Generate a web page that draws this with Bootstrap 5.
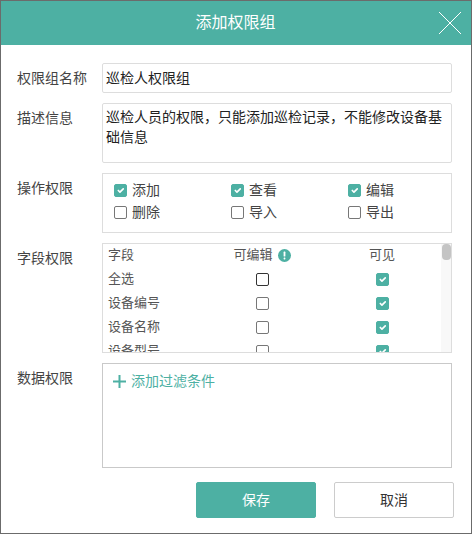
<!DOCTYPE html>
<html lang="zh">
<head>
<meta charset="utf-8">
<title>添加权限组</title>
<link rel="stylesheet" href="https://cdn.jsdelivr.net/npm/bootstrap@5.3.0/dist/css/bootstrap.min.css">
<style>
html,body{height:100%;background:#fff}
body{font-family:"Liberation Sans","Noto Sans CJK SC",sans-serif;font-size:14px;color:#333}
.dlg{width:472px;height:534px;border:1px solid #6b6b6b;display:flex;flex-direction:column;overflow:hidden}
.dlg-head{height:44px;flex:none;background:#4db0a3;color:#fff;font-size:16px;position:relative}
.dlg-head span{margin-left:-1px}
.dlg-x{position:absolute;right:9px;top:10px}
.dlg-body{flex:1;padding:18px 19px 0 16px}
.frow{display:flex;margin-bottom:10px}
.flabel{width:85px;flex:none;color:#444;line-height:20px;padding-top:5px}
.fbox{border:1px solid #ddd;min-width:0;width:350px;flex:none}
.name-box{height:30px;border-radius:2px;padding:0 3px;line-height:29px;color:#222}
.desc-box{height:60px;border-radius:2px;padding:3px 3px;line-height:20px;color:#222;font-family:"Liberation Sans","Noto Sans CJK TC",sans-serif}
.ops{height:60px;padding:5px 11px}
.op-item{width:117px;height:22px;display:flex;align-items:center;gap:5px;color:#444}
.op-item:nth-child(3n){width:92px}
.form-check-input.ck[type=checkbox]{width:13px;height:13px;margin:0;flex:none;border:1px solid #777;border-radius:2px;background-size:11px;box-shadow:none}
.form-check-input.ck[type=checkbox]:checked{background-color:#4db0a3;border-color:#4db0a3}
.form-check-input.ck-dark[type=checkbox]{border-color:#333}
.fields{height:110px;position:relative;overflow:hidden;font-size:13px;color:#555;padding-left:5px}
.frw{height:24px;display:flex;align-items:center;flex:none;margin-top:-1px;margin-bottom:1px}
.fc1{width:95px}
.fc2{width:118px;display:flex;justify-content:center;align-items:center;gap:5px}
.fc3{width:122px;display:flex;justify-content:center}
.track{position:absolute;right:0;top:0;bottom:0;width:10px;background:#f8f8f8}
.thumb{position:absolute;right:0;top:0;height:16px;width:9px;background:#c4c4c4;border-radius:4px}
.databox{height:105px;border-color:#c9c9c9;padding:7px 10px}
.add-link{color:#4db0a3;display:flex;align-items:center;gap:5px;line-height:20px}
.dlg-foot{display:flex;justify-content:flex-end;gap:18px;margin-top:14px;margin-right:-2px}
.btn-s,.btn-c{width:120px;height:36px;font-size:14px;border-radius:2px;padding:0}
.btn-s{background:#4db0a3;border:1px solid #4db0a3;color:#fff}
.btn-c{background:#fff;border:1px solid #ccc;color:#333}
</style>
</head>
<body>
<div class="dlg">
  <div class="dlg-head d-flex align-items-center justify-content-center">
    <span>添加权限组</span>
    <svg class="dlg-x" width="24" height="24" viewBox="0 0 24 24" fill="none" stroke="#fff" stroke-width="1"><path d="M1 1 23 23M23 1 1 23"/></svg>
  </div>
  <div class="dlg-body">
    <div class="frow"><div class="flabel">权限组名称</div><div class="fbox name-box">巡检人权限组</div></div>
    <div class="frow"><div class="flabel">描述信息</div><div class="fbox desc-box">巡检人员的权限，只能添加巡检记录，不能修改设备基础信息</div></div>
    <div class="frow"><div class="flabel">操作权限</div>
      <div class="fbox ops d-flex flex-wrap align-content-start">
        <label class="op-item"><input class="form-check-input ck" type="checkbox" checked>添加</label>
        <label class="op-item"><input class="form-check-input ck" type="checkbox" checked>查看</label>
        <label class="op-item"><input class="form-check-input ck" type="checkbox" checked>编辑</label>
        <label class="op-item"><input class="form-check-input ck" type="checkbox">删除</label>
        <label class="op-item"><input class="form-check-input ck" type="checkbox">导入</label>
        <label class="op-item"><input class="form-check-input ck" type="checkbox">导出</label>
      </div>
    </div>
    <div class="frow"><div class="flabel">字段权限</div>
      <div class="fbox fields">
        <div class="frw"><div class="fc1">字段</div><div class="fc2">可编辑
          <svg width="13" height="13" viewBox="0 0 13 13"><circle cx="6.5" cy="6.5" r="6.5" fill="#4db0a3"/><rect x="5.6" y="2.6" width="1.8" height="5" rx=".6" fill="#fff"/><rect x="5.6" y="8.6" width="1.8" height="1.8" rx=".6" fill="#fff"/></svg></div><div class="fc3">可见</div></div>
        <div class="frw"><div class="fc1">全选</div><div class="fc2"><input class="form-check-input ck ck-dark" type="checkbox"></div><div class="fc3"><input class="form-check-input ck" type="checkbox" checked></div></div>
        <div class="frw"><div class="fc1">设备编号</div><div class="fc2"><input class="form-check-input ck" type="checkbox"></div><div class="fc3"><input class="form-check-input ck" type="checkbox" checked></div></div>
        <div class="frw"><div class="fc1">设备名称</div><div class="fc2"><input class="form-check-input ck" type="checkbox"></div><div class="fc3"><input class="form-check-input ck" type="checkbox" checked></div></div>
        <div class="frw"><div class="fc1">设备型号</div><div class="fc2"><input class="form-check-input ck" type="checkbox"></div><div class="fc3"><input class="form-check-input ck" type="checkbox" checked></div></div>
        <div class="track"><div class="thumb"></div></div>
      </div>
    </div>
    <div class="frow"><div class="flabel">数据权限</div>
      <div class="fbox databox">
        <div class="add-link"><svg width="13" height="13" viewBox="0 0 13 13" fill="#4db0a3"><rect x="5.5" y="0" width="2" height="13"/><rect x="0" y="5.5" width="13" height="2"/></svg>添加过滤条件</div>
      </div>
    </div>
    <div class="dlg-foot">
      <button type="button" class="btn btn-s">保存</button>
      <button type="button" class="btn btn-c">取消</button>
    </div>
  </div>
</div>
<script src="https://cdn.jsdelivr.net/npm/bootstrap@5.3.0/dist/js/bootstrap.bundle.min.js"></script>
</body>
</html>
